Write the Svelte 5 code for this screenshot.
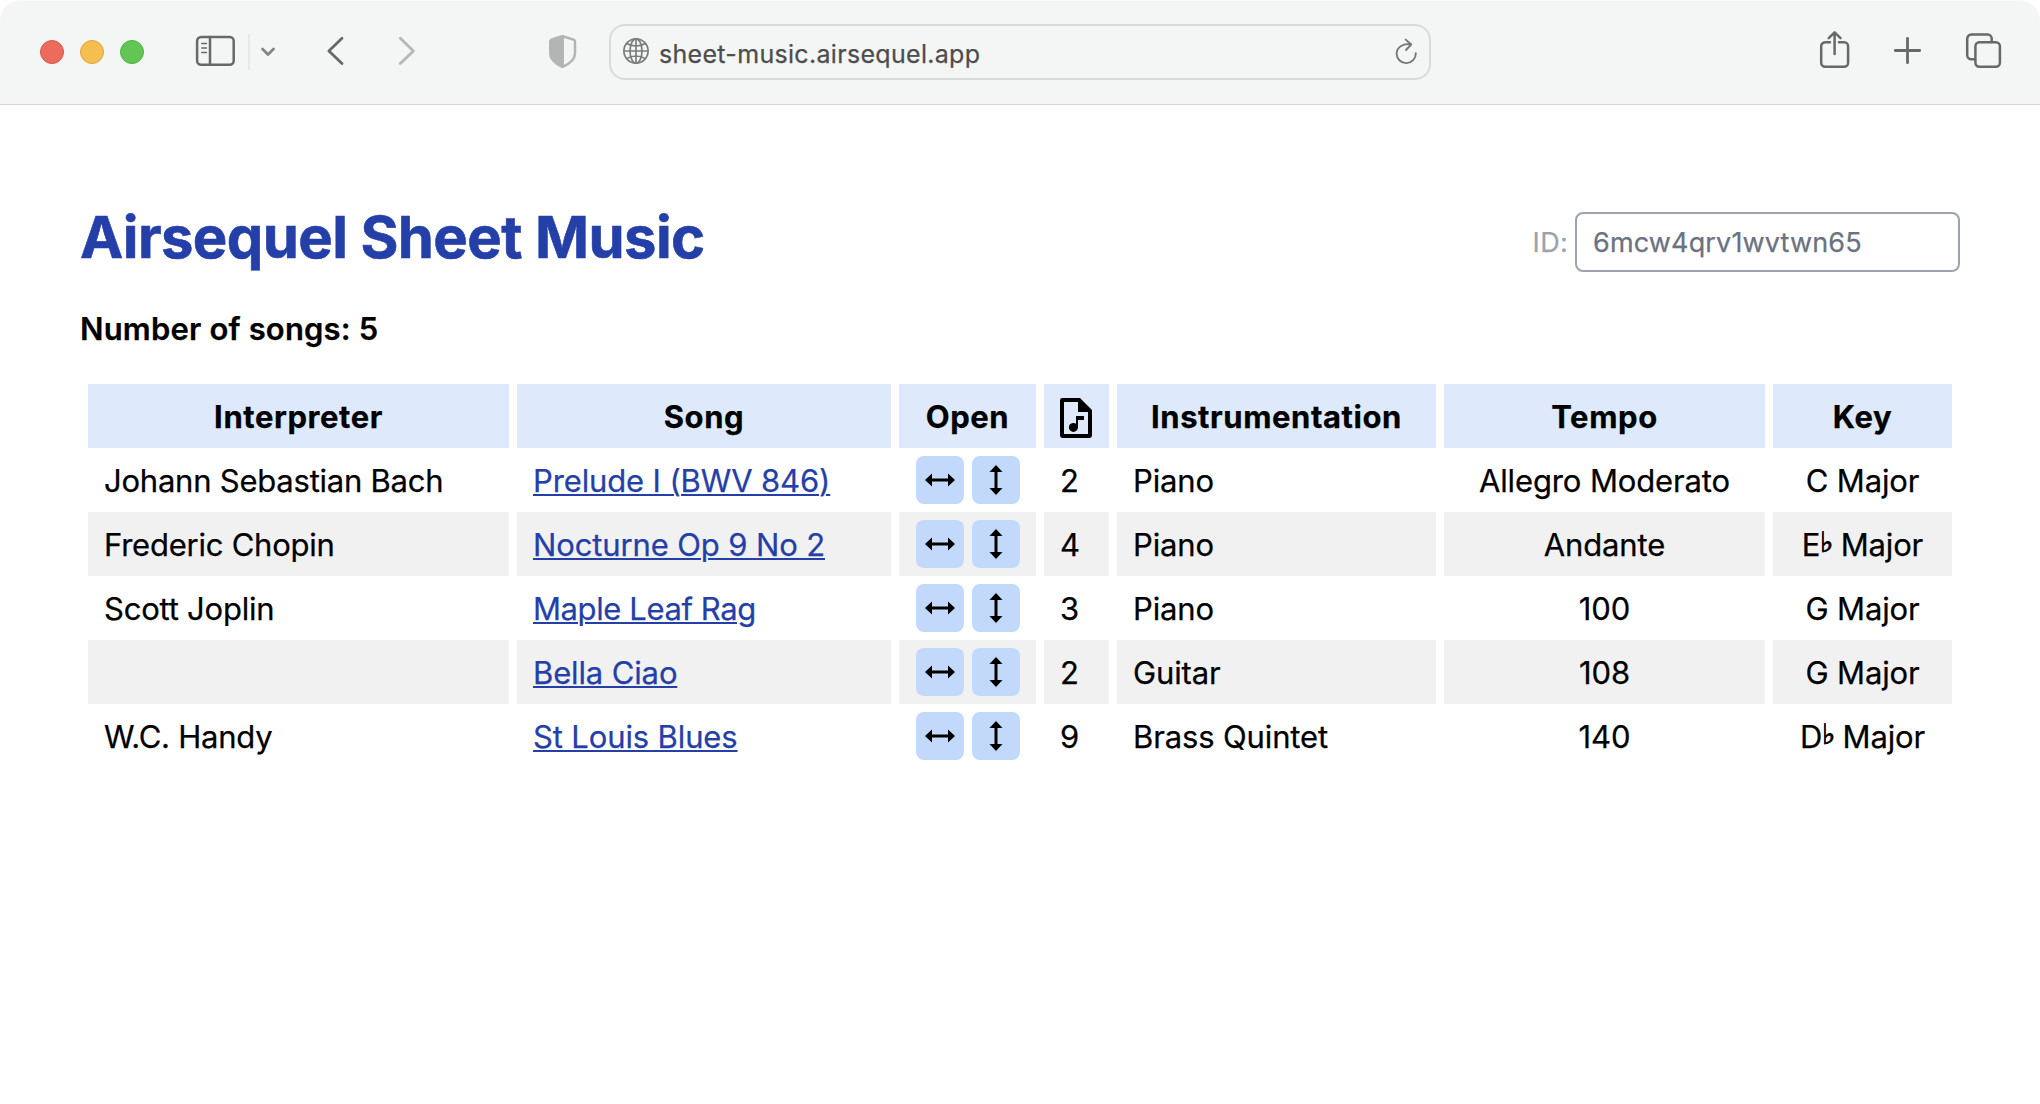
<script>
  const songs = [
    { artist: 'Johann Sebastian Bach', title: 'Prelude I (BWV 846)', pages: 2, parts: 'Piano', tempo: 'Allegro Moderato', note: 'C' },
    { artist: 'Frederic Chopin', title: 'Nocturne Op 9 No 2', pages: 4, parts: 'Piano', tempo: 'Andante', note: 'E', flat: true },
    { artist: 'Scott Joplin', title: 'Maple Leaf Rag', pages: 3, parts: 'Piano', tempo: '100', note: 'G', tight: true },
    { artist: '', title: 'Bella Ciao', pages: 2, parts: 'Guitar', tempo: '108', note: 'G' },
    { artist: 'W.C. Handy', title: 'St Louis Blues', pages: 9, parts: 'Brass Quintet', tempo: '140', note: 'D', flat: true }
  ];
</script>

<div class="window">
  <nav class="toolbar">
    <div class="lights">
      <span class="light red"></span>
      <span class="light yellow"></span>
      <span class="light green"></span>
    </div>
    <svg class="sidebar" width="41" height="40" viewBox="0 0 41 40">
      <rect x="2.1" y="4.9" width="36.6" height="27.8" rx="4" />
      <path d="M15 5v27.6" />
      <path class="thin" d="M6.8 11.5h4.6M6.8 16h4.6M6.8 20.5h4.6" />
    </svg>
    <span class="divider"></span>
    <svg class="chevron" width="18" height="40" viewBox="0 0 18 40"><path d="M3.5 17l5.5 5.6 5.5-5.6" /></svg>
    <svg class="back" width="20" height="40" viewBox="0 0 20 40"><path d="M17 6.2L3.9 19 17 31.6" /></svg>
    <svg class="forward" width="20" height="40" viewBox="0 0 20 40"><path d="M3.3 6.2L16.4 19 3.3 31.6" /></svg>
    <svg class="shield" width="30" height="40" viewBox="0 0 30 40">
      <path d="M14.7 4.2L25.6 7.6q1.4.5 1.4 2v11.8c0 6-4.6 9.8-12.3 13.4C7 31.2 2.4 27.4 2.4 21.4V9.6q0-1.5 1.4-2z" />
      <path class="fill" d="M14.7 4.2V34.8C7 31.2 2.4 27.4 2.4 21.4V9.6q0-1.5 1.4-2z" />
    </svg>
    <div class="address">
      <svg class="globe" width="28" height="40" viewBox="0 0 28 40">
        <circle cx="14" cy="19" r="12.1" />
        <ellipse cx="14" cy="19" rx="6" ry="12.1" />
        <path d="M14 7v24M2 19h24M4.7 11.6q9.3 4.8 18.6 0M4.7 26.4q9.3-4.8 18.6 0" />
      </svg>
      <span class="url">sheet-music.airsequel.app</span>
      <svg class="reload" width="24" height="40" viewBox="0 0 24 40">
        <path d="M16.8 12.4C8.8 11 2.6 15.4 2.6 21.8a9.6 9.6 0 0 0 19.2-.5" />
        <path d="M11.7 7.6l5.5 4.9-5.2 5.5" />
      </svg>
    </div>
    <svg class="share" width="32" height="40" viewBox="0 0 32 40">
      <path d="M11 10.3H6.2a4 4 0 0 0-4 4v16.5a4 4 0 0 0 4 4h18.9a4 4 0 0 0 4-4V14.3a4 4 0 0 0-4-4H20" />
      <path d="M15.6 21.9V.6M9.7 6.1L15.6.3l5.9 5.8" />
    </svg>
    <svg class="plus" width="30" height="40" viewBox="0 0 30 40"><path d="M14.5 6.3v24.4M2.3 18.5h24.4" /></svg>
    <svg class="tabs" width="38" height="40" viewBox="0 0 38 40">
      <rect x="10.4" y="10.3" width="24.5" height="24.5" rx="4" />
      <path d="M26.7 10V6.6a4 4 0 0 0-4-4H6.2a4 4 0 0 0-4 4V23.2a4 4 0 0 0 4 4H10" />
    </svg>
  </nav>

  <main>
    <header>
      <h1>Airsequel Sheet Music</h1>
      <label>
        <span>ID:</span>
        <input type="text" value="6mcw4qrv1wvtwn65" />
      </label>
    </header>

    <p class="count">Number of songs: 5</p>

    <table>
      <colgroup>
        <col class="c-artist" /><col class="c-song" /><col class="c-open" /><col class="c-pages" />
        <col class="c-parts" /><col class="c-tempo" /><col class="c-key" />
      </colgroup>
      <thead>
        <tr>
          <th>Interpreter</th>
          <th>Song</th>
          <th>Open</th>
          <th>
            <svg class="file" width="32" height="40" viewBox="0 0 16 20">
              <path fill-rule="evenodd" d="M1.2 0H10l6 6v12.800A1.2 1.2 0 0 1 14.8 20H1.2A1.2 1.2 0 0 1 0 18.8V1.2A1.2 1.2 0 0 1 1.2 0zM2 2v16h12V7H9V2z" />
              <circle cx="6.7" cy="14.7" r="2.25" />
              <path d="M8 9h4v2H9v3.700H8z" />
            </svg>
          </th>
          <th>Instrumentation</th>
          <th>Tempo</th>
          <th>Key</th>
        </tr>
      </thead>
      <tbody>
        {#each songs as song}
          <tr>
            <td class="artist">{song.artist}</td>
            <td><a href="#song" class:tight={song.tight}>{song.title}</a></td>
            <td class="open">
              <div class="actions">
                <button aria-label="Open horizontally">
                  <svg width="30" height="30" viewBox="0 0 30 30"><path d="M0 15l7-6.500v5h16v-5l7 6.500-7 6.500v-5H7v5z" /></svg>
                </button>
                <button aria-label="Open vertically">
                  <svg width="30" height="30" viewBox="0 0 30 30"><path d="M15 0l6.500 7h-5v16h5L15 30l-6.500-7h5V7h-5z" /></svg>
                </button>
              </div>
            </td>
            <td>{song.pages}</td>
            <td>{song.parts}</td>
            <td class="center">{song.tempo}</td>
            <td class="center">{song.note}{#if song.flat}<span class="flat">♭</span>{/if} Major</td>
          </tr>
        {/each}
      </tbody>
    </table>
  </main>
</div>

<style>
  :global(body) {
    background: #fff;
    overflow: hidden;
  }

  .window {
    height: 1104px;
    font-family: Inter, 'Liberation Sans', sans-serif;
    color: #000;
    background: #fff;
    -webkit-text-stroke: 0.25px currentColor;
  }

  .toolbar {
    display: flex;
    align-items: center;
    box-sizing: border-box;
    height: 105px;
    padding: 0 37px 0 40px;
    background: #f4f6f5;
    border-bottom: 1px solid #d3d5d4;
    border-radius: 20px 20px 0 0;
    box-shadow: inset 0 1px 0 #fafbfb;
  }

  svg {
    display: block;
    flex: none;
    overflow: visible;
  }

  .toolbar svg {
    fill: none;
    stroke: #676968;
    stroke-width: 2.5;
    stroke-linecap: round;
    stroke-linejoin: round;
  }

  .lights {
    display: flex;
    gap: 16px;
  }

  .light {
    box-sizing: border-box;
    width: 24px;
    height: 24px;
    border-radius: 50%;
  }

  .red { background: #ed6a5f; border: 1px solid #d85549; }
  .yellow { background: #f5bf4f; border: 1px solid #dba53b; }
  .green { background: #62c655; border: 1px solid #4fae40; }

  .sidebar { margin-left: 51px; }
  .toolbar .sidebar .thin { stroke-width: 1.6; }

  .divider {
    width: 2px;
    height: 36px;
    margin-left: 12px;
    background: #e7e9e8;
  }

  .toolbar .chevron { margin-left: 9px; stroke: #848589; stroke-width: 2.8; }
  .toolbar .back { margin-left: 48px; stroke-width: 2.8; }
  .toolbar .forward { margin-left: 52px; stroke: #b6b8b7; stroke-width: 2.8; }
  .toolbar .shield { margin-left: 131px; stroke: #b3b5b4; }
  .shield .fill { fill: #b3b5b4; }

  .address {
    display: flex;
    align-items: center;
    box-sizing: border-box;
    width: 822px;
    height: 56px;
    margin-left: 31px;
    padding: 0 11px;
    border: 2px solid #d9dbda;
    border-radius: 16px;
  }

  .toolbar .globe { stroke: #7b7d7c; stroke-width: 1.7; }

  .url {
    margin-left: 9px;
    padding-top: 3px;
    font-size: 25px;
    letter-spacing: 0.31px;
    color: #4d4d4d;
  }

  .toolbar .reload { margin-left: auto; stroke: #757776; stroke-width: 1.9; }
  .share { margin-left: auto; }
  .plus { margin-left: 42px; }
  .toolbar .plus { stroke-width: 2.8; }
  .tabs { margin-left: 42px; }

  main {
    padding: 102px 80px 0;
  }

  header {
    display: flex;
    justify-content: space-between;
    height: 65px;
  }

  h1 {
    margin: 0;
    font-size: 58px;
    line-height: 60px;
    font-weight: 700;
    letter-spacing: -0.6px;
    color: #253fa8;
    -webkit-text-stroke: 0.6px currentColor;
  }

  label {
    display: flex;
    align-items: center;
    gap: 7px;
    height: 60px;
    margin-top: 5px;
    font-size: 27px;
    letter-spacing: 0.3px;
    color: #9ca3af;
  }

  input {
    box-sizing: border-box;
    width: 385px;
    height: 60px;
    padding: 0 16px;
    border: 2px solid #9ca3af;
    border-radius: 8px;
    background: #fff;
    font: inherit;
    letter-spacing: 0.16px;
    color: #6b7280;
    -webkit-text-stroke: 0.25px currentColor;
  }

  .count {
    margin: 33px 0 31px;
    font-size: 31px;
    line-height: 48px;
    font-weight: 600;
    letter-spacing: 0.17px;
  }

  table {
    width: 1880px;
    table-layout: fixed;
    border-collapse: separate;
    border-spacing: 8px 0;
    font-size: 31px;
    line-height: 48px;
    letter-spacing: -0.13px;
  }

  .c-artist { width: 421px; }
  .c-song { width: 374px; }
  .c-open { width: 137px; }
  .c-pages { width: 65px; }
  .c-parts { width: 319px; }
  .c-tempo { width: 321px; }
  .c-key { width: 179px; }

  th, td {
    box-sizing: border-box;
    height: 64px;
    padding: 9px 16px 7px;
    white-space: nowrap;
    vertical-align: middle;
  }

  th {
    background: #dee9fc;
    font-weight: 700;
    letter-spacing: 0.58px;
    text-align: center;
  }

  td { text-align: left; }
  tbody tr:nth-child(even) td { background: #f1f1f1; }
  .center { text-align: center; }
  .artist { letter-spacing: -0.23px; }

  .file { position: relative; top: 1px; }

  a {
    color: #253fa8;
    text-decoration-thickness: 2px;
    text-underline-offset: 2px;
  }

  .tight { letter-spacing: -0.4px; }

  td.open { padding: 8px 16px 8px 17px; }

  .actions {
    display: flex;
    gap: 8px;
  }

  button {
    display: grid;
    place-items: center;
    width: 48px;
    height: 48px;
    padding: 0;
    border: 0;
    border-radius: 8px;
    background: #c3d9fb;
  }

  .flat {
    font-family: 'DejaVu Sans', sans-serif;
    font-size: 28px;
    line-height: 0;
    vertical-align: 4px;
    letter-spacing: -1.5px;
    -webkit-text-stroke: 0.9px currentColor;
  }
</style>
